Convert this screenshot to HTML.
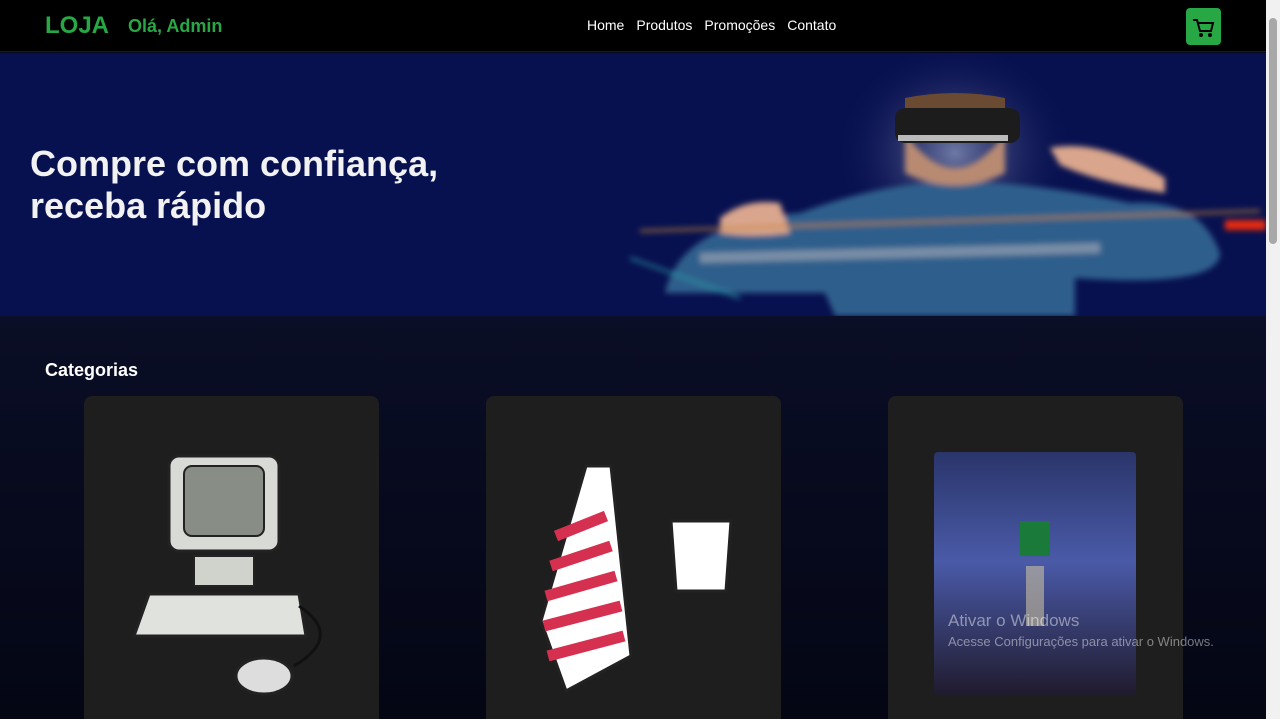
<!DOCTYPE html>
<html style="overflow:hidden;height:719px"><head><meta charset="utf-8"><style>
*{margin:0;padding:0;box-sizing:border-box}
body{width:1280px;height:719px;overflow:hidden;background:#070a1c;font-family:"Liberation Sans",sans-serif;position:relative}
.nav{position:absolute;left:0;top:0;width:1266px;height:52px;background:#000;border-bottom:1px solid #111a3a}
.logo{position:absolute;left:45px;top:12px;color:#28a745;font-weight:bold;font-size:24px}
.hi{position:absolute;left:128px;top:16px;color:#28a745;font-weight:bold;font-size:18px}
.links{position:absolute;left:587px;top:17px;color:#fff;font-size:14px}
.links span{margin-right:12px}
.cart{position:absolute;left:1186px;top:8px;width:35px;height:37px;background:#28a745;border-radius:4px}
.banner{position:absolute;left:0;top:53px;width:1266px;height:263px;background:#081150;overflow:hidden}
.banner h1{position:absolute;left:30px;top:90px;color:#f2f2f2;font-size:36px;line-height:42px;font-weight:bold}
.content{position:absolute;left:0;top:316px;width:1266px;height:403px;background:linear-gradient(#0a0e26,#040614);overflow:hidden}
.cat{position:absolute;left:45px;top:44px;color:#fff;font-weight:bold;font-size:18px}
.card{position:absolute;top:80px;width:295px;height:340px;background:#1e1e1f;border-radius:8px}
.sb{position:absolute;left:1266px;top:0;width:14px;height:719px;background:#f1f1f1}
.sb div{position:absolute;left:3px;top:18px;width:8px;height:226px;background:#a8a8a8;border-radius:4px}
.wm{position:absolute;left:948px;top:611px;color:rgba(255,255,255,.45);font-size:17px}
.wm2{position:absolute;left:948px;top:634px;color:rgba(255,255,255,.45);font-size:13px}
</style></head><body>
<div class="nav">
<div class="logo">LOJA</div><div class="hi">Olá, Admin</div>
<div class="links"><span>Home</span><span>Produtos</span><span>Promoções</span><span>Contato</span></div>
<div class="cart"><svg width="35" height="37" viewBox="0 0 35 37"><path d="M7 12h4l3 11h11l2-8H12" fill="none" stroke="#000" stroke-width="2"/><circle cx="15" cy="27" r="2" fill="#000"/><circle cx="24" cy="27" r="2" fill="#000"/></svg></div>
</div>
<div class="banner">
<h1>Compre com confiança,<br>receba rápido</h1>
<svg width="1266" height="263" style="position:absolute;left:0;top:0">
<defs><radialGradient id="g" cx="0.5" cy="0.5" r="0.5"><stop offset="0" stop-color="#9aa4c8" stop-opacity=".7"/><stop offset="1" stop-color="#081150" stop-opacity="0"/></radialGradient>
<filter id="b"><feGaussianBlur stdDeviation="3"/></filter></defs>
<ellipse cx="955" cy="100" rx="120" ry="110" fill="url(#g)"/>
<g filter="url(#b)">
<path d="M665 240 Q680 170 800 160 Q880 130 955 128 Q1040 130 1130 150 Q1200 145 1220 200 Q1220 235 1075 225 L1075 263 L835 263 L825 240 Z" fill="#2f5f8c"/>
<path d="M905 80 Q955 150 1005 80 L1005 120 Q955 145 905 120Z" fill="#b88a72"/>
<path d="M720 165 Q745 145 780 150 L790 180 Q750 185 720 180Z" fill="#d9a58c"/>
<path d="M1050 95 Q1100 85 1165 125 L1165 140 Q1100 130 1060 112Z" fill="#d9a58c"/>
<path d="M640 178 L1260 158" stroke="#c8852e" stroke-width="3" opacity=".7"/>
<path d="M1225 172 L1266 172" stroke="#e82a10" stroke-width="10"/>
<path d="M700 205 L1100 195" stroke="#e8d7d0" stroke-width="10" opacity=".4"/>
<path d="M630 205 L740 245" stroke="#2aa0a8" stroke-width="4" opacity=".5"/>
</g>
<path d="M905 45 Q955 35 1005 45 L1005 55 L905 55Z" fill="#6a4a30"/>
<rect x="895" y="55" width="125" height="35" rx="10" fill="#1c1c1c"/>
<rect x="898" y="82" width="110" height="6" fill="#bbb"/>
</svg>
</div>
<div class="content">
<div class="cat">Categorias</div>
<div class="card" style="left:84px"><svg width="295" height="340"><rect x="85" y="60" width="110" height="95" rx="10" fill="#d8dbd5" stroke="#222" stroke-width="3"/><rect x="100" y="70" width="80" height="70" rx="8" fill="#888d85" stroke="#222" stroke-width="2"/><rect x="110" y="160" width="60" height="30" fill="#cfd3cc" stroke="#222" stroke-width="2"/><path d="M50 240 L65 198 L215 198 L222 240Z" fill="#e0e2de" stroke="#222" stroke-width="3"/><ellipse cx="180" cy="280" rx="28" ry="18" fill="#ddd" stroke="#222" stroke-width="3"/><path d="M215 210 Q260 240 210 270" fill="none" stroke="#111" stroke-width="3"/></svg></div>
<div class="card" style="left:486px"><svg width="295" height="340"><path d="M100 70 L125 70 L145 260 L80 295 L55 225Z" fill="#fff" stroke="#222" stroke-width="3"/><path d="M70 140 L120 120 M65 170 L125 150 M60 200 L130 180 M58 230 L135 210 M62 260 L138 240" stroke="#d5304f" stroke-width="11"/><path d="M185 125 L245 125 L240 195 L190 195Z" fill="#fff" stroke="#222" stroke-width="3"/></svg></div>
<div class="card" style="left:888px"><svg width="295" height="340"><defs><linearGradient id="a" x1="0" y1="0" x2="0" y2="1"><stop offset="0" stop-color="#2a356a"/><stop offset=".45" stop-color="#4a5aa8"/><stop offset="1" stop-color="#1f1a2c"/></linearGradient></defs><rect x="46" y="56" width="202" height="244" rx="4" fill="url(#a)"/><rect x="132" y="125" width="30" height="35" fill="#1a7a3a"/><rect x="138" y="170" width="18" height="60" fill="#c9c0a0" opacity=".6"/></svg></div>
</div>
<div class="wm">Ativar o Windows</div>
<div class="wm2">Acesse Configurações para ativar o Windows.</div>
<div class="sb"><div></div></div>
</body></html>
